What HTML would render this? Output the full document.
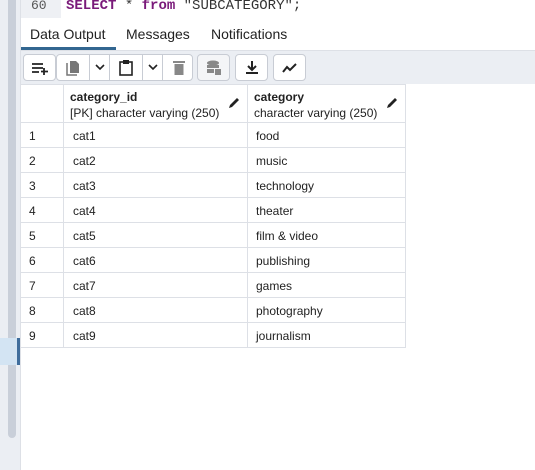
<!DOCTYPE html>
<html><head><style>
*{margin:0;padding:0;box-sizing:border-box}
body{width:535px;height:470px;overflow:hidden;background:#fff;font-family:"Liberation Sans",sans-serif;position:relative}
.abs{position:absolute}
.cell{position:absolute;border-right:1px solid #dde0e6;border-bottom:1px solid #dde0e6;font-size:12px;color:#222;padding-left:6px}
.btn{position:absolute;top:54px;height:27px;background:#fff;border:1px solid #c8ccd4;border-radius:4px}
.ic{position:absolute;top:0;height:25px;display:flex;align-items:center;justify-content:center}
</style></head><body>
<div class="abs" style="left:0;top:0;width:20px;height:470px;background:#ebeef3"></div>
<div class="abs" style="left:8px;top:0;width:8px;height:438px;background:#c9cfd9;border-radius:0 0 4px 4px"></div>
<div class="abs" style="left:0;top:338px;width:17px;height:27px;background:#d3e4f3"></div>
<div class="abs" style="left:17px;top:338px;width:3px;height:27px;background:#3f6d9c"></div>
<div class="abs" style="left:20px;top:0;width:1px;height:470px;background:#dde0e6"></div>
<!-- editor line -->
<div class="abs" style="left:21px;top:0;width:40px;height:18px;background:#eef0f4;font-family:'Liberation Mono',monospace;font-size:13px;color:#555;padding-left:10px;line-height:12px">60</div>
<div class="abs" style="left:66px;top:0;font-family:'Liberation Mono',monospace;font-size:14px;line-height:12px;color:#333;white-space:pre"><span style="color:#7a1a7a;font-weight:bold">SELECT</span> * <span style="color:#7a1a7a;font-weight:bold">from</span> "SUBCATEGORY";</div>
<!-- tabs -->
<div class="abs" style="left:30px;top:26px;font-size:14px;color:#222">Data Output</div>
<div class="abs" style="left:126px;top:26px;font-size:14px;color:#222">Messages</div>
<div class="abs" style="left:211px;top:26px;font-size:14px;color:#222">Notifications</div>
<div class="abs" style="left:21px;top:47px;width:95px;height:3px;background:#326690"></div>
<!-- toolbar -->
<div class="abs" style="left:21px;top:50px;width:514px;height:34px;background:#ebeef3;border-top:1px solid #dde0e6"></div>
<div class="btn" style="left:23px;width:33px"><div class="ic" style="width:31px"><svg width="18" height="14"><path d="M1 3h11M1 7h11M1 11h7M13 7v7M10 10.5h7" stroke="#222" stroke-width="1.8" fill="none"/></svg></div></div>
<div class="btn" style="left:56px;width:137px">
 <div class="ic" style="left:0;width:32px"><svg width="14" height="16"><path d="M1 3v12h10" stroke="#777" stroke-width="1.5" fill="none"/><path d="M4 1h6l3 3v9H4z" fill="#777"/></svg></div>
 <div class="abs" style="left:32px;top:0;width:1px;height:25px;background:#c8ccd4"></div>
 <div class="ic" style="left:33px;width:19px"><svg width="10" height="7"><path d="M1 1l4 4 4-4" stroke="#222" stroke-width="1.6" fill="none"/></svg></div>
 <div class="abs" style="left:52px;top:0;width:1px;height:25px;background:#c8ccd4"></div>
 <div class="ic" style="left:53px;width:32px"><svg width="14" height="17"><rect x="1" y="3" width="12" height="13" stroke="#222" stroke-width="1.6" fill="none"/><rect x="4" y="1" width="6" height="4" fill="#222"/></svg></div>
 <div class="abs" style="left:85px;top:0;width:1px;height:25px;background:#c8ccd4"></div>
 <div class="ic" style="left:86px;width:19px"><svg width="10" height="7"><path d="M1 1l4 4 4-4" stroke="#222" stroke-width="1.6" fill="none"/></svg></div>
 <div class="abs" style="left:105px;top:0;width:1px;height:25px;background:#c8ccd4"></div>
 <div class="ic" style="left:106px;width:31px"><svg width="12" height="15"><rect x="0" y="1" width="12" height="2" fill="#888"/><rect x="1.5" y="4" width="9" height="11" fill="#888"/></svg></div>
</div>
<div class="btn" style="left:197px;width:33px;background:#f4f5f7"><div class="ic" style="width:31px"><svg width="16" height="16"><ellipse cx="7" cy="3" rx="6" ry="2.5" fill="#888"/><rect x="1" y="5" width="12" height="3" fill="#888"/><rect x="1" y="9" width="7" height="4" fill="#888"/><rect x="9" y="9" width="6" height="6" fill="#888"/></svg></div></div>
<div class="btn" style="left:235px;width:33px"><div class="ic" style="width:31px"><svg width="14" height="15"><path d="M7 1v8M3 6l4 4 4-4" stroke="#222" stroke-width="2" fill="none"/><rect x="1" y="12" width="12" height="2" fill="#222"/></svg></div></div>
<div class="btn" style="left:273px;width:33px"><div class="ic" style="width:31px"><svg width="16" height="10"><path d="M1 9l4-5 3 3 6-6" stroke="#222" stroke-width="2" fill="none"/></svg></div></div>
<!-- table -->
<div class="cell" style="left:21px;top:84px;width:43px;height:39px;border-top:1px solid #dde0e6"></div>
<div class="cell" style="left:64px;top:84px;width:184px;height:39px;border-top:1px solid #dde0e6;padding-top:4px;line-height:16px"><b>category_id</b><br>[PK] character varying (250)<svg class="abs" style="left:164px;top:12px" width="12" height="12"><path d="M1 11l1-3 7-7 2 2-7 7z" fill="#222"/></svg></div>
<div class="cell" style="left:248px;top:84px;width:158px;height:39px;border-top:1px solid #dde0e6;padding-top:4px;line-height:16px"><b>category</b><br>character varying (250)<svg class="abs" style="left:138px;top:12px" width="12" height="12"><path d="M1 11l1-3 7-7 2 2-7 7z" fill="#222"/></svg></div>
<div id="rows"></div>
<script>
var c=["food","music","technology","theater","film &amp; video","publishing","games","photography","journalism"],h="";
for(var i=0;i<9;i++){var t=123+i*25;
h+='<div class="cell" style="left:21px;top:'+t+'px;width:43px;height:25px;line-height:26px;padding-left:8px">'+(i+1)+'</div>'+
'<div class="cell" style="left:64px;top:'+t+'px;width:184px;height:25px;line-height:26px;padding-left:9px">cat'+(i+1)+'</div>'+
'<div class="cell" style="left:248px;top:'+t+'px;width:158px;height:25px;line-height:26px;padding-left:8px">'+c[i]+'</div>';}
document.getElementById("rows").innerHTML=h;
</script>
</body></html>
